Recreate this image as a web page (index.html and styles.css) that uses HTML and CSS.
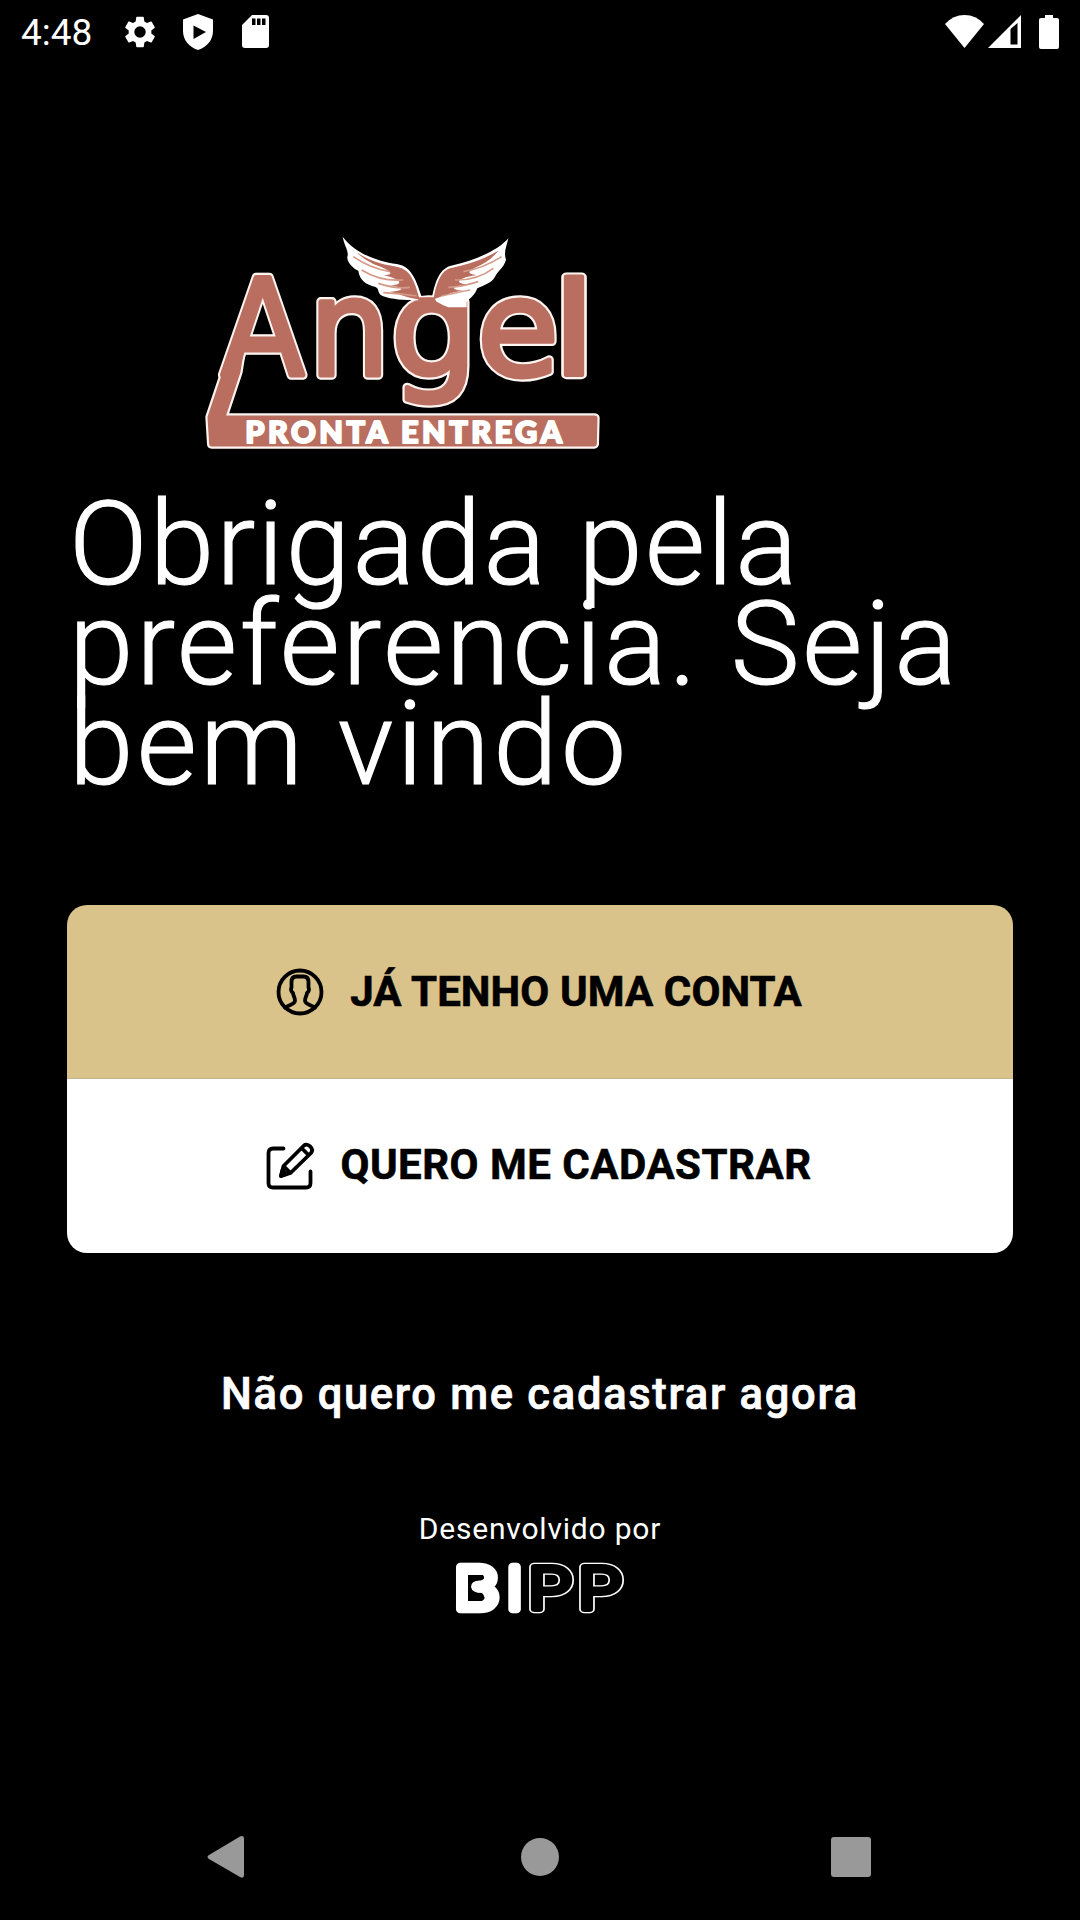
FILE: index.html
```html
<!DOCTYPE html>
<html lang="pt-BR">
<head>
  <meta charset="UTF-8">
  <meta name="viewport" content="width=device-width, initial-scale=1.0">
  <title>Angel Pronta Entrega</title>
  <link rel="stylesheet" href="styles.css">
</head>
<body>
  <header class="status-bar">
    <span class="clock">4:48</span>
    <svg class="gear" width="38" height="38" viewBox="0 0 24 24"><path d="M19.14 12.94c.04-.3.06-.61.06-.94s-.02-.64-.07-.94l2.03-1.58a.49.49 0 0 0 .12-.61l-1.92-3.32a.49.49 0 0 0-.59-.22l-2.39.96a7 7 0 0 0-1.62-.94l-.36-2.54a.48.48 0 0 0-.48-.41h-3.84a.47.47 0 0 0-.47.41l-.36 2.54c-.59.24-1.13.57-1.62.94l-2.39-.96a.48.48 0 0 0-.59.22L2.74 8.87a.47.47 0 0 0 .12.61l2.03 1.58a6.7 6.7 0 0 0 0 1.88l-2.03 1.58a.49.49 0 0 0-.12.61l1.92 3.32c.12.22.37.29.59.22l2.39-.96c.5.38 1.03.7 1.62.94l.36 2.54c.05.24.24.41.48.41h3.84c.24 0 .44-.17.47-.41l.36-2.54c.59-.24 1.13-.56 1.62-.94l2.39.96c.22.08.47 0 .59-.22l1.92-3.32a.47.47 0 0 0-.12-.61zM12 15.6A3.6 3.6 0 1 1 12 8.4a3.6 3.6 0 0 1 0 7.2z"/></svg>
    <svg class="shield" width="30" height="36" viewBox="0 0 30 36"><path fill-rule="evenodd" d="M15 0 30 5.500V17c0 9-6 16-15 19C6 33 0 26 0 17V5.500zM10.500 11.500V25L23 18z"/></svg>
    <svg class="sd" width="27" height="33" viewBox="0 0 27 33"><path fill-rule="evenodd" d="M10 0H24q3 0 3 3V30q0 3-3 3H3q-3 0-3-3V10zM10 3.500V10h3.500V3.500zm5 0V10h3.500V3.500zm5 0V10h3.500V3.500z"/></svg>
    <svg class="wifi" width="39" height="33" viewBox="0 0 39 33"><path d="M0 9Q8 0 19.500 0T39 9L19.500 33z"/></svg>
    <svg class="signal" width="33" height="33" viewBox="0 0 33 33"><path fill-rule="evenodd" d="M0 33 33 0V33zM22.500 14V29.500H29.500V8z"/></svg>
    <svg class="battery" width="20" height="34" viewBox="0 0 20 34"><path d="M6 0h8v3h4q2 0 2 2v27q0 2-2 2H2q-2 0-2-2V5q0-2 2-2h4z"/></svg>
  </header>

  <main class="welcome">
    <svg class="logo" width="420" height="240" viewBox="0 0 1260 720">
      <defs>
        <g id="angel">
          <text transform="translate(94 465) scale(.91 1)">A</text>
          <text transform="translate(358 465) scale(.95 1)">n</text>
          <text transform="translate(602 465) scale(1.02 1)">g</text>
          <text transform="translate(861 465)">e</text>
          <text transform="translate(1085 465) scale(1.2 .96)">l</text>
          <path d="M178 240 60 592 65 672H1213L1215 594H98L144 455z"/>
        </g>
      </defs>
      <use href="#angel" class="letters-edge"/>
      <use href="#angel" class="letters"/>
      <text class="tagline" x="166" y="668" textLength="950" lengthAdjust="spacing">PRONTA ENTREGA</text>
      <!-- wings -->
      <path class="wing" d="M458 50C500 105 570 125 620 132C670 140 680 190 696 232L712 238L726 232C735 190 745 150 780 138C860 120 925 90 955 55C950 80 940 95 948 120C940 145 925 150 915 170C905 190 880 195 862 205C855 225 840 235 830 245V262H775L760 256L740 245L665 240C630 240 590 236 572 225C562 215 568 205 555 200C530 195 508 180 505 152C488 145 470 125 472 110C478 95 462 75 458 50z"/>
      <path class="wing-top" d="M500 97C550 130 590 135 620 140C665 148 675 190 690 240H712C660 238 640 225 600 215C640 212 650 205 600 195C640 195 640 180 580 165C620 165 600 150 550 132Q520 118 500 97z"/>
      <path class="wing-top" d="M925 92C860 130 800 140 780 145C750 155 738 195 730 240L715 242C760 230 780 215 820 212C780 208 780 200 835 193C790 190 800 175 860 165C820 160 840 150 885 128Q910 112 925 92z"/>
      <path class="feather" d="M490 110Q540 145 600 155M515 150Q570 185 640 180M565 190Q620 208 660 202M580 218Q630 220 680 228M935 110Q880 145 820 155M910 145Q860 182 795 180M865 185Q810 202 775 202M840 210Q790 220 755 228"/>
      <path class="wing-top" d="M688 232H732L752 268H672z"/>
    </svg>

    <h1 class="title">
      <span class="line line-1">Obrigada pela</span>
      <span class="line line-2">preferencia. Seja</span>
      <span class="line line-3">bem vindo</span>
    </h1>

    <div class="actions">
      <button type="button" class="btn btn-login">
        <svg width="48" height="48" viewBox="0 0 48 48"><circle cx="24" cy="24" r="21.500"/><path d="M9 39.500C13 37 19 36.500 19 32.500 19 29.500 17.500 28.500 17 25 15 23.500 14.500 21 15.500 19.500V14Q15.500 8.500 20.500 8.500H27.500Q32.500 8.500 32.500 14V19.500C33.500 21 33 23.500 31 25 30.500 28.500 29 29.500 29 32.500 29 36.500 35 37 39 39.500"/></svg>
        <span class="text-login">JÁ TENHO UMA CONTA</span>
      </button>
      <button type="button" class="btn btn-signup">
        <svg width="48" height="48" viewBox="0 0 48 48"><path d="M17.500 6.500H7Q2.500 6.500 2.500 11V41Q2.500 45.500 7 45.500H40Q44.500 45.500 44.500 41V29.500"/><path d="M15 34 17.500 24 38 3.500C41.500.5 48.500 6.500 45 11L24.500 31zM17.500 24 24.500 31M35.500 6 42.500 13"/><path class="nib" d="M15 34 16.500 28 20.500 32z"/></svg>
        <span class="text-signup">QUERO ME CADASTRAR</span>
      </button>
    </div>

    <a class="skip" href="#">Não quero me cadastrar agora</a>

    <div class="credit">
      <span class="credit-text">Desenvolvido por</span>
      <svg class="bipp" width="170" height="54" viewBox="0 0 170 54">
        <text class="solid bold" transform="translate(2 48.500) scale(1.04 1)">B</text>
        <path class="counter" d="M13 15H28Q31 19 26 20.500Q16 20 16 27Q17 33 27 33Q32 38 27 41H13z"/>
        <text class="solid" transform="translate(52 48.500)">I</text>
        <text class="hollow-edge" transform="translate(72.500 48.500) scale(1.25 1)">P</text>
        <text class="hollow" transform="translate(72.500 48.500) scale(1.25 1)">P</text>
        <text class="hollow-edge" transform="translate(122.500 48.500) scale(1.25 1)">P</text>
        <text class="hollow" transform="translate(122.500 48.500) scale(1.25 1)">P</text>
      </svg>
    </div>
  </main>

  <nav class="nav-bar">
    <svg width="42" height="44" viewBox="0 0 42 44"><path d="M33 1.500Q37 0 37 4V40Q37 44 33 42L2 24Q-1 22 2 20z"/></svg>
    <svg width="40" height="44" viewBox="0 0 40 44"><circle cx="20" cy="22" r="19"/></svg>
    <svg width="40" height="44" viewBox="0 0 40 44"><rect y="2" width="40" height="40" rx="3"/></svg>
  </nav>
</body>
</html>
```
FILE: styles.css
```css
* {
  box-sizing: border-box;
}
body {
  margin: 0;
  width: 1080px;
  height: 1920px;
  background: #000;
  color: #fff;
  font-family: Roboto, 'Liberation Sans', sans-serif;
  display: flex;
  flex-direction: column;
  overflow: hidden;
}
svg {
  display: block;
  flex: none;
  overflow: visible;
}
.status-bar {
  height: 63px;
  padding: 0 20px 0 21px;
  display: flex;
  align-items: center;
  fill: #fff;
}
.clock {
  width: 100px;
  padding-top: 2px;
  font-size: 37px;
  white-space: nowrap;
}
.shield {
  margin-left: 24px;
}
.sd {
  margin-left: 29px;
}
.wifi {
  margin-left: auto;
}
.signal {
  margin-left: 4px;
}
.battery {
  margin: 0 1px 0 18px;
}
.welcome {
  flex: 1;
  padding: 157px 67px 0;
  display: flex;
  flex-direction: column;
}
.logo {
  margin-left: 123px;
  font-family: 'DejaVu Sans', sans-serif;
  font-size: 400px;
}
.letters-edge {
  fill: #fff;
  stroke: #fff4f0;
  stroke-width: 28px;
  stroke-linejoin: round;
}
.letters {
  fill: #b96e60;
  stroke: #b96e60;
  stroke-width: 15px;
  stroke-linejoin: round;
}
.tagline {
  font-family: Lato, 'DejaVu Sans', sans-serif;
  font-size: 92px;
  font-weight: 900;
  fill: #fff;
  stroke: #fff;
  stroke-width: 6px;
  stroke-linejoin: round;
}
.wing {
  fill: #fff;
}
.wing-top {
  fill: #b96e60;
}
.feather {
  fill: none;
  stroke: #d39a88;
  stroke-width: 5px;
}
.title {
  margin: 34px 0 0 2px;
  font-size: 116px;
  line-height: 100px;
  font-weight: 300;
  -webkit-text-stroke: 1.2px #fff;
}
.line {
  display: block;
  white-space: nowrap;
}
.line-1 {
  letter-spacing: 2.2px;
}
.line-2 {
  letter-spacing: 2.8px;
}
.line-3 {
  letter-spacing: 3.3px;
}
.actions {
  margin-top: 111px;
  border-radius: 20px;
  overflow: hidden;
}
.btn {
  width: 100%;
  height: 174px;
  padding: 0 2px 0 0;
  border: none;
  display: flex;
  align-items: center;
  justify-content: center;
  gap: 26px;
  color: #000;
  font-family: inherit;
  font-size: 42px;
  font-weight: 700;
  -webkit-text-stroke: 0.6px #000;
}
.btn svg {
  fill: none;
  stroke: #000;
  stroke-width: 3.8px;
  stroke-linecap: round;
  stroke-linejoin: round;
}
.btn .nib {
  fill: #000;
}
.text-login {
  padding-bottom: 1px;
  letter-spacing: 0.1px;
}
.text-signup {
  padding-bottom: 3px;
  letter-spacing: 0.5px;
}
.btn-login {
  background: #dac28b;
  border-bottom: 1px solid #c4b48c;
}
.btn-signup {
  background: #fff;
}
.skip {
  margin-top: 117px;
  align-self: center;
  color: #fff;
  font-size: 43.5px;
  line-height: 50px;
  font-weight: 500;
  letter-spacing: 1.7px;
  -webkit-text-stroke: 0.7px #fff;
  text-decoration: none;
  white-space: nowrap;
}
.credit {
  margin-top: 91px;
  display: flex;
  flex-direction: column;
  align-items: center;
}
.credit-text {
  font-size: 30px;
  line-height: 36px;
  letter-spacing: 0.8px;
}
.bipp {
  margin-top: 13px;
  font-family: Inter, 'Liberation Sans', sans-serif;
  font-size: 58px;
  font-weight: 300;
  stroke-linejoin: round;
}
.solid {
  fill: #fff;
  stroke: #fff;
  stroke-width: 8.5px;
}
.bold {
  font-weight: 800;
}
.counter {
  fill: #000;
}
.hollow-edge {
  fill: #fff;
  stroke: #fff;
  stroke-width: 8.5px;
}
.hollow {
  fill: #000;
  stroke: #000;
  stroke-width: 5.8px;
}
.nav-bar {
  height: 126px;
  padding: 0 209px 0 207px;
  display: flex;
  align-items: center;
  justify-content: space-between;
  fill: #999;
}
```
